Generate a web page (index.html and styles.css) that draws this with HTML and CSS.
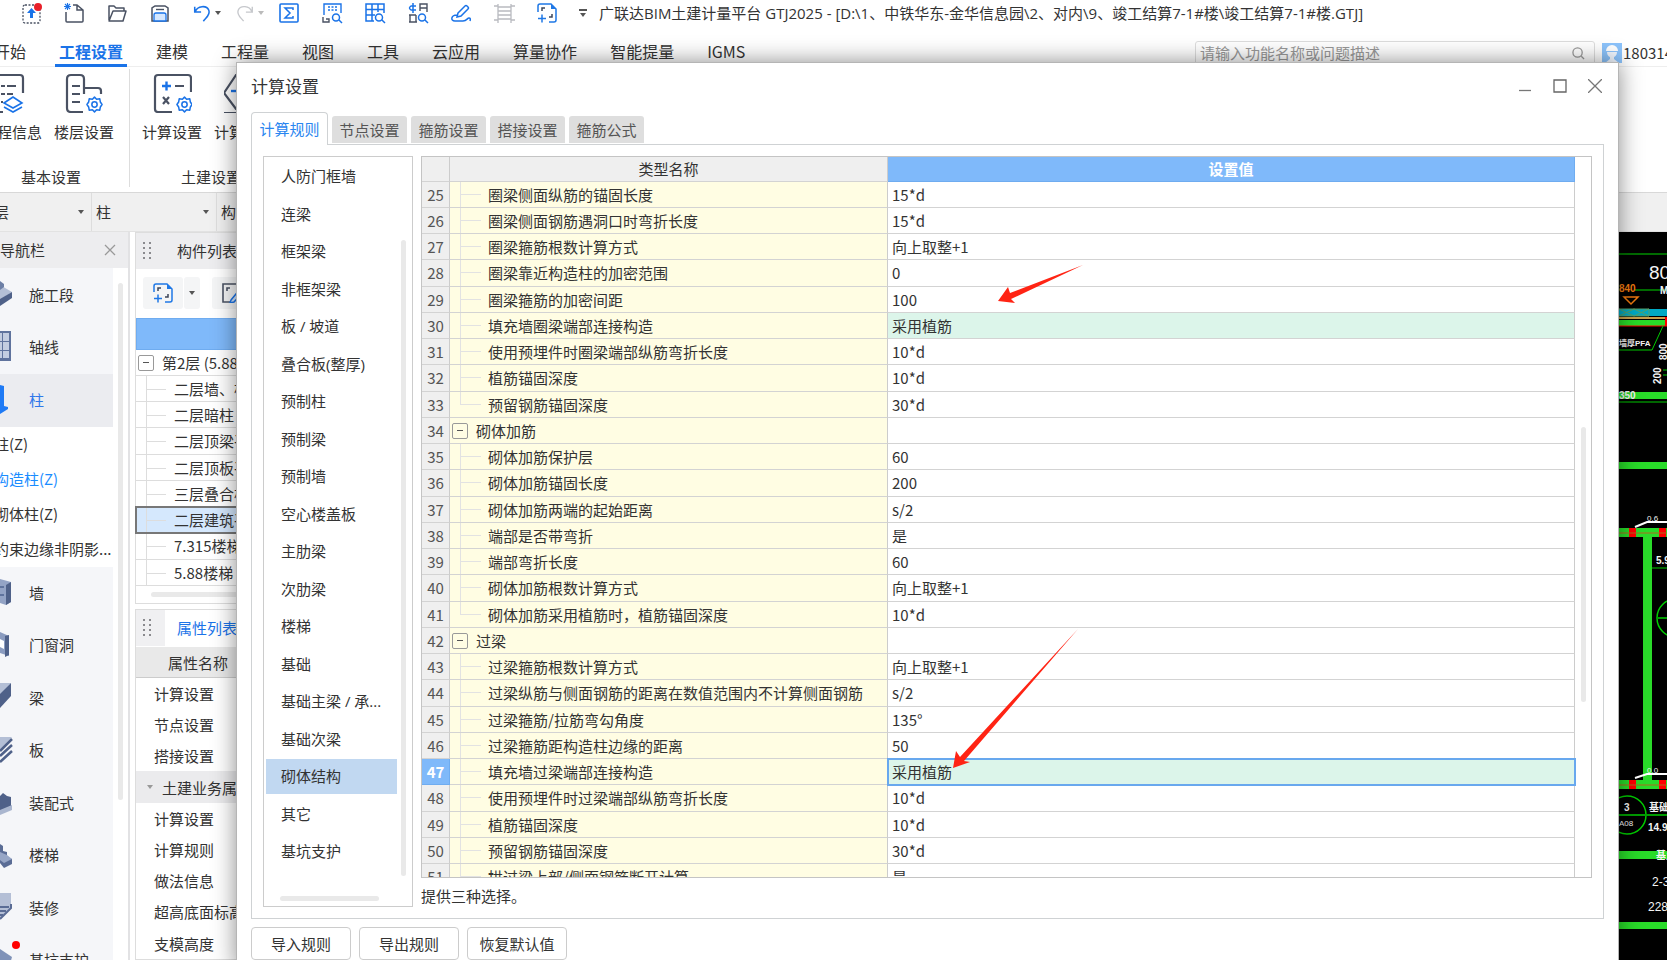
FILE: index.html
```html
<!DOCTYPE html>
<html lang="zh-CN">
<head>
<meta charset="utf-8">
<title>广联达BIM土建计量平台 GTJ2025</title>
<link rel="stylesheet" href="styles.css">
</head>
<body>
<svg class="defs" aria-hidden="true">
  <symbol id="gear" viewBox="0 0 18 18"><path d="M9 1.2 11.2 3.4 14.6 3 15.2 6.4 17 9 15.2 11.6 14.6 15 11.2 14.6 9 16.8 6.8 14.6 3.4 15 2.8 11.6 1 9 2.8 6.4 3.4 3 6.8 3.4Z" fill="none" stroke="#1a73e8" stroke-width="1.6" stroke-linejoin="round"/><circle cx="9" cy="9" r="2.8" fill="none" stroke="#1a73e8" stroke-width="1.6"/></symbol>
  <symbol id="newcomp" viewBox="0 0 20 20"><path d="M1 9V3q0-2 2-2h11l5 5v11q0 2-2 2h-5M1 15.500h8M5 11.500v8" fill="none" stroke="#1f78e6" stroke-width="1.500"/><path d="M14 1v5h5Z" fill="#1f78e6"/><path d="M5 8V5h3M15 11v3h-3" fill="none" stroke="#3c4558" stroke-width="1.500"/></symbol>
  <symbol id="grip" viewBox="0 0 8 18"><path d="M0 0h2v2H0zM6 0h2v2H6zM0 5h2v2H0zM6 5h2v2H6zM0 10h2v2H0zM6 10h2v2H6zM0 15h2v2H0zM6 15h2v2H6z" fill="#8a8a8e"/></symbol>
</svg>
<div class="app">
  <header class="titlebar">
    <div class="quick">
      <button aria-label="上传"><svg viewBox="0 0 22 22"><rect x="3" y="3" width="17" height="18" rx="2" fill="none" stroke="#4a5263" stroke-width="1.300" stroke-dasharray="2 1.500"/><path d="M11.500 6 16 11h-3v5h-3v-5H7Z" fill="#1a73e8"/><circle cx="18" cy="5" r="4" fill="#e8202a"/></svg></button>
      <button aria-label="新建"><svg viewBox="0 0 22 22"><path d="M3 10v9q0 1 1 1h15q1 0 1-1V8l-6-5h-4M14 3v5h6" fill="none" stroke="#4a5263" stroke-width="1.500"/><path d="M2 2l5 5M7 2 2 7M4.500 1v7M1 4.500h7" stroke="#1a73e8" stroke-width="1.100"/></svg></button>
      <button aria-label="打开"><svg viewBox="0 0 22 22"><path d="M3 18V4h5l2 2h8v3M3 19 7 9h13l-3 10Z" fill="none" stroke="#4a5263" stroke-width="1.500" stroke-linejoin="round"/></svg></button>
      <button aria-label="保存"><svg viewBox="0 0 22 22"><path d="M3 19V6l3-2h10l3 2v13Z" fill="none" stroke="#4a5263" stroke-width="1.500"/><path d="M5 19v-6q0-2 2-2h8q2 0 2 2v6Z" fill="#d6e8ff" stroke="#1a73e8" stroke-width="1.300"/><path d="M7 7.500h8" stroke="#4a5263" stroke-width="1.400"/></svg></button>
      <button class="pair" aria-label="撤销"><svg viewBox="0 0 22 22"><path d="M3 4v6h7M3.500 9.500C6 3 16 2 18.500 8c2 5-3 8-6 12" fill="none" stroke="#1a73e8" stroke-width="1.700"/></svg><i class="caret"></i></button>
      <button class="pair dim" aria-label="重做"><svg viewBox="0 0 22 22"><path d="M19 4v6h-7M18.500 9.500C16 3 6 2 3.500 8c-2 5 3 8 6 12" fill="none" stroke="#c6c8cc" stroke-width="1.500"/></svg><i class="caret"></i></button>
      <button aria-label="汇总"><svg viewBox="0 0 22 22"><rect x="2" y="2" width="18" height="18" rx="1" fill="none" stroke="#1a73e8" stroke-width="1.600"/><path d="M15 8V6H7l5 5-5 5h8v-2" fill="none" stroke="#1a73e8" stroke-width="1.500"/></svg></button>
      <button aria-label="查看报表"><svg viewBox="0 0 22 22"><path d="M3 13V2h17v9M7 5h2M10.500 5h2M14 5h2M7 8h2M10.500 8h2M14 8h2" fill="none" stroke="#1a73e8" stroke-width="1.400"/><path d="M2 15v5h6v-3H5" fill="none" stroke="#4a5263" stroke-width="1.400"/><circle cx="15" cy="15.500" r="3.500" fill="none" stroke="#1a73e8" stroke-width="1.500"/><path d="m18 18 3 3" stroke="#1a73e8" stroke-width="1.500"/></svg></button>
      <button aria-label="查看工程量"><svg viewBox="0 0 22 22"><path d="M10 19H2V2h18v9M2 7.500h18M2 13h9M8 2v17M14 2v8" fill="none" stroke="#1a73e8" stroke-width="1.500"/><circle cx="15" cy="15.500" r="3.500" fill="none" stroke="#1a73e8" stroke-width="1.500"/><path d="m18 18 3 3" stroke="#1a73e8" stroke-width="1.500"/></svg></button>
      <button aria-label="查看三维"><svg viewBox="0 0 22 22"><path d="M13 9V2h7v8M13 6h7M2 13h7M3 13v7M2 20h8M9 13v7" fill="none" stroke="#4a5263" stroke-width="1.400"/><path d="M9 4H4q-3 2 0 4h5M6 1v10" fill="none" stroke="#1a73e8" stroke-width="1.500"/><circle cx="15" cy="15.500" r="3.500" fill="none" stroke="#1a73e8" stroke-width="1.500"/><path d="m18 18 3 3" stroke="#1a73e8" stroke-width="1.500"/></svg></button>
      <button aria-label="编辑"><svg viewBox="0 0 22 22"><path d="m8 11 7-7q1-1 2 0l1 1q1 1 0 2l-7 7-4 1ZM7 13c-6 0-7 6-2 6h8c4 0 4-3 6-3q2 0 1 3" fill="none" stroke="#1a73e8" stroke-width="1.500"/></svg></button>
      <button aria-label="楼梯"><svg viewBox="0 0 22 22"><path d="M5 2v19M18 2v19M1 4h4M18 4h4M1 18h4M18 18h4M5 5h13M5 9h13M5 13h13M5 17h13" fill="none" stroke="#b9bbc0" stroke-width="1.300"/></svg></button>
      <button aria-label="新建构件"><svg viewBox="0 0 22 22"><use href="#newcomp" x="1" y="1" width="20" height="20"/></svg></button>
      <button class="more" aria-label="更多"><i class="bar"></i><i class="caret"></i></button>
    </div>
    <div class="apptitle">广联达BIM土建计量平台 GTJ2025 - [D:\1、中铁华东-金华信息园\2、对内\9、竣工结算7-1#楼\竣工结算7-1#楼.GTJ]</div>
  </header>
  <nav class="menubar">
    <a href="#">开始</a><a href="#" class="on">工程设置</a><a href="#">建模</a><a href="#">工程量</a><a href="#">视图</a><a href="#">工具</a><a href="#">云应用</a><a href="#">算量协作</a><a href="#">智能提量</a><a href="#">IGMS</a>
    <div class="account">
      <label class="search"><input type="text" aria-label="搜索" placeholder="请输入功能名称或问题描述"><svg viewBox="0 0 14 14"><circle cx="6" cy="6" r="5" fill="none" stroke="#999" stroke-width="1.400"/><path d="m10 10 3 3" stroke="#999" stroke-width="1.400"/></svg></label>
      <svg class="avatar" viewBox="0 0 20 20"><rect width="20" height="20" fill="#8cc3fb"/><path d="M4 8a6 6 0 0 1 12 0Z" fill="#fff"/><path d="M5 9h10c0 4-3 5-3 5v2l5 4H3l5-4v-2S5 13 5 9Z" fill="#f1f7ff"/></svg>
      <span class="user">180314</span>
    </div>
  </nav>
  <section class="ribbon">
    <div class="group g1">
      <div class="tools">
        <button><svg viewBox="0 0 40 40"><path d="M4 2h24q3 0 3 3v15M4 2v37h7M9 13h4M15 13h9M9 21h4M15 21h6M9 29h2" fill="none" stroke="#4a5263" stroke-width="2.200"/><path d="m12 30 9-6 9 6-9 5ZM12 34l9 5 9-5" fill="none" stroke="#1a73e8" stroke-width="1.600"/></svg>工程信息</button>
        <button><svg viewBox="0 0 40 40"><path d="M19 39H7q-4 0-4-4V6q0-4 4-4h9q4 0 4 4v15M8 13h8M8 21h8M8 29h8M20 15h14q3 0 3 3v3" fill="none" stroke="#4a5263" stroke-width="2.200"/><use href="#gear" x="22" y="23" width="17" height="17"/></svg>楼层设置</button>
      </div>
      <h2>基本设置</h2>
    </div>
    <div class="group g2">
      <div class="tools">
        <button><svg viewBox="0 0 40 40"><path d="M20 39H6q-3 0-3-3V5q0-3 3-3h30q3 0 3 3v14" fill="none" stroke="#4a5263" stroke-width="2.200"/><path d="M10 13h9M14.500 8.500v9" stroke="#1a73e8" stroke-width="2.400"/><path d="M23 13h9M11 24l6 7M17 24l-6 7" stroke="#4a5263" stroke-width="2.200"/><use href="#gear" x="24" y="23" width="17" height="17"/></svg>计算设置</button>
        <button><svg viewBox="0 0 40 40"><path d="M36 2H12L0 20l12 16h20M0 40h30" fill="none" stroke="#4a5263" stroke-width="2.200"/><path d="M7 18h12" stroke="#1a73e8" stroke-width="2.400"/></svg>计算规则</button>
      </div>
      <h2>土建设置</h2>
    </div>
  </section>
  <div class="combos">
    <button class="c1">层<i class="caret"></i></button><button class="c2">柱<i class="caret"></i></button><button class="c3">构造柱<i class="caret"></i></button>
  </div>
  <main class="work">
    <aside class="nav">
      <div class="phead">导航栏<button class="x" aria-label="关闭"><svg viewBox="0 0 12 12"><path d="m1 1 10 10M11 1 1 11" stroke="#999" stroke-width="1.300"/></svg></button></div>
      <div class="navbody">
        <div class="navlist">
          <a href="#"><svg viewBox="0 0 24 34"><path d="M0 9 12 16 0 24Z" fill="#b4bfd6"/><path d="M0 5 4 8v3L0 14Z" fill="#6d7fa6"/><path d="M12 16v6L0 30V23Z" fill="#4f6189"/></svg>施工段</a>
          <a href="#"><svg viewBox="0 0 24 34"><path d="M0 3h11v30H0Z" fill="#5f739d"/><path d="M0 5h2v8H0ZM3 5h6v8H3ZM0 14h2v8H0ZM3 14h6v8H3ZM0 23h2v7H0ZM3 23h6v7H3Z" fill="#c3cde0"/></svg>轴线</a>
          <a href="#" class="on"><svg viewBox="0 0 24 34"><path d="M0 4 4 5v20l4 1v2l-8 5Z" fill="#1f7af5"/></svg>柱</a>
          <div class="subs"><a href="#">柱(Z)</a><a href="#" class="cur">构造柱(Z)</a><a href="#">砌体柱(Z)</a><a href="#">约束边缘非阴影...</a></div>
          <a href="#"><svg viewBox="0 0 24 34"><path d="m0 5 11 3v20l-5 3L0 29Z" fill="#93a3c5"/><path d="m6 11 5-3v20l-5 3Z" fill="#4f6189"/><path d="M0 13h4M0 21h4" stroke="#5f739d" stroke-width="2"/></svg>墙</a>
          <a href="#"><svg viewBox="0 0 24 34"><path d="m0 6 9 4v20l-9-3Z" fill="#8b9cc0"/><path d="m5 10 4-1v20l-4 2Z" fill="#4f6189"/><path d="m0 13 4 2v8l-4-2Z" fill="#fff"/></svg>门窗洞</a>
          <a href="#"><svg viewBox="0 0 24 34"><path d="M0 4h11L0 16Z" fill="#b4bfd6"/><path d="M11 4v13L0 29V15Z" fill="#4f6189"/></svg>梁</a>
          <a href="#"><svg viewBox="0 0 24 34"><path d="M0 6h12L0 19Z" fill="#b4bfd6"/><path d="M12 8 0 20M12 14 0 25M12 20 0 31" stroke="#4f6189" stroke-width="2.500"/></svg>板</a>
          <a href="#"><svg viewBox="0 0 24 34"><path d="m0 12 3-3 4 3 4 1v9L0 27Z" fill="#4f6189"/><path d="M12 21v5L0 31v-5Z" fill="#aab6cf"/></svg>装配式</a>
          <a href="#"><svg viewBox="0 0 24 34"><path d="m0 8 3 2v5l4 1v5l5 2v5l-8 4-4-5Z" fill="#5a6c95"/><path d="m0 16 7 3 5 4-8 4-4-3Z" fill="#97a6c6"/></svg>楼梯</a>
          <a href="#"><svg viewBox="0 0 24 34"><path d="M0 4h11v14L0 29Z" fill="#b4bfd6"/><path d="M0 18h9M0 22h6M0 26h3M11 15v4L0 30" stroke="#5a6c95" stroke-width="2" fill="none"/></svg>装修</a>
          <a href="#" class="dot"><svg viewBox="0 0 24 34"><path d="m0 8 12 8-4 14H0Z" fill="#7f92b8"/></svg>基坑支护</a>
        </div>
        <i class="vthumb"></i>
      </div>
    </aside>
    <section class="mid">
      <div class="comp">
        <div class="phead"><svg class="grip"><use href="#grip"/></svg>构件列表</div>
        <div class="ctools"><button aria-label="新建"><svg viewBox="0 0 20 20"><use href="#newcomp"/></svg></button><button class="drop" aria-label="新建选项"><i class="caret"></i></button><button class="edit" aria-label="编辑"><svg viewBox="0 0 20 20"><path d="M9 19H1V1h14M5 8V5h3" fill="none" stroke="#4a5263" stroke-width="1.600"/><path d="M9 17 18 6l3 3-9 10-4 1Z" fill="#d3e6ff" stroke="#1a73e8" stroke-width="1.500"/></svg></button></div>
        <div class="bluebar"></div>
        <ul class="tree">
          <li class="root"><button class="box" aria-label="折叠"></button>第2层 (5.88~8.78)</li>
          <li>二层墙、柱</li><li>二层暗柱</li><li>二层顶梁平面</li><li>二层顶板平面</li><li>三层叠合板</li><li class="sel">二层建筑平面</li><li>7.315楼梯</li><li>5.88楼梯</li>
        </ul>
        <i class="hthumb"></i>
      </div>
      <div class="props">
        <div class="ptab"><span><svg class="grip"><use href="#grip"/></svg></span><a href="#">属性列表</a></div>
        <div class="pth">属性名称</div>
        <ul><li>计算设置</li><li>节点设置</li><li>搭接设置</li><li class="grp"><i class="caret"></i>土建业务属性</li><li>计算设置</li><li>计算规则</li><li>做法信息</li><li>超高底面标高</li><li>支模高度</li></ul>
      </div>
    </section>
    <svg class="cad" viewBox="0 0 48 728" preserveAspectRatio="xMinYMin slice">
      <rect width="48" height="728" fill="#000"/>
      <g stroke="#006b00" stroke-width="2" fill="none"><path d="M0 22h48M16 58h32"/></g>
      <g fill="#29db29"><path d="M0 88h46v6H0zM0 160h48v7H0zM0 230h48v7H0zM0 296h48v9H0zM24 305h9v243h-9zM0 548h48v9H0zM0 619h48v8H0zM0 690h48v7H0z"/></g>
      <path d="M0 86h46" stroke="#c9a04c" stroke-width="2"/><path d="M0 94h48" stroke="#f00"/>
      <rect y="77" width="48" height="7" fill="#00a9c4"/><path d="M0 77h30v7H0l15-7 15 7M0 77l15 7 15-7" stroke="#55a06a" fill="none"/>
      <path d="M46 85h2v9h-2zM10 296h7v9h-7zM40 296h7v9h-7zM10 548h7v9h-7zM40 548h7v9h-7z" fill="#f00"/>
      <path d="M0 301h48M0 553h48" stroke="#b06a20"/>
      <g stroke="#0c0" fill="none"><path d="M0 118h33l11-24M0 170h48M44 138h4M44 143h4M33 336h15"/><circle cx="8" cy="583" r="19" stroke-width="1.500"/><circle cx="57" cy="386" r="19" stroke-width="1.500"/><path d="M38 386h10M0 583h48" stroke="#009c00" stroke-width="2"/></g>
      <path d="M16 295 28 290H48M16 546l12-4H48" stroke="#fff" stroke-width="2" fill="none"/>
      <path d="M5 65h14l-7 7Z" stroke="#f07a10" stroke-width="1.500" fill="none"/>
      <g class="cadtext" fill="#f4f4f4">
        <text x="0" y="60" class="b o">840</text><text x="30" y="47" class="big">80</text><text x="41" y="62" class="b">MZ</text>
        <text x="0" y="114" class="s bold">墙厚PFA</text><text x="0" y="167" class="b">350</text>
        <text transform="translate(48 128) rotate(-90)" class="b">800</text><text transform="translate(42 152) rotate(-90)" class="b">200</text>
        <text x="28" y="289" class="s">0.6</text><text x="28" y="541" class="s">0.0</text><text x="37" y="332" class="b">5.94</text>
        <text x="5" y="579" class="b">3</text><text x="0" y="594" class="s">A08</text><text x="30" y="579" class="b">基础梁</text><text x="29" y="599" class="b">14.93</text>
        <text x="37" y="627" class="b">基土</text><text x="33" y="654" class="m">2-3</text><text x="29" y="679" class="m">228</text>
      </g>
    </svg>
  </main>
</div>

<div class="dialog" role="dialog" aria-label="计算设置">
  <div class="dhead"><h1>计算设置</h1>
    <div class="wbtn"><button aria-label="最小化"><svg viewBox="0 0 14 14"><path d="M1 11.500h12" stroke="#777" stroke-width="1.300"/></svg></button><button aria-label="最大化"><svg viewBox="0 0 14 14"><path d="M1 1h12v12H1Z" fill="none" stroke="#666" stroke-width="1.300"/></svg></button><button aria-label="关闭"><svg viewBox="0 0 14 14"><path d="m0 0 14 14M14 0 0 14" stroke="#777" stroke-width="1.300"/></svg></button></div>
  </div>
  <div class="tabs"><button class="on">计算规则</button><button>节点设置</button><button>箍筋设置</button><button>搭接设置</button><button>箍筋公式</button></div>
  <div class="panel">
    <div class="listbox">
      <ul><li>人防门框墙</li><li>连梁</li><li>框架梁</li><li>非框架梁</li><li>板 / 坡道</li><li>叠合板(整厚)</li><li>预制柱</li><li>预制梁</li><li>预制墙</li><li>空心楼盖板</li><li>主肋梁</li><li>次肋梁</li><li>楼梯</li><li>基础</li><li>基础主梁 / 承...</li><li>基础次梁</li><li class="on">砌体结构</li><li>其它</li><li>基坑支护</li></ul>
      <i class="vthumb"></i><i class="hthumb"></i>
    </div>
    <div class="right">
      <div class="gridbox">
        <table>
          <colgroup><col class="cn"><col class="ct"><col></colgroup>
          <thead><tr><th></th><th>类型名称</th><th class="act">设置值</th></tr></thead>
          <tbody>
            <tr><th>25</th><td>圈梁侧面纵筋的锚固长度</td><td>15*d</td></tr>
            <tr><th>26</th><td>圈梁侧面钢筋遇洞口时弯折长度</td><td>15*d</td></tr>
            <tr><th>27</th><td>圈梁箍筋根数计算方式</td><td>向上取整+1</td></tr>
            <tr><th>28</th><td>圈梁靠近构造柱的加密范围</td><td>0</td></tr>
            <tr><th>29</th><td>圈梁箍筋的加密间距</td><td>100</td></tr>
            <tr><th>30</th><td>填充墙圈梁端部连接构造</td><td class="green">采用植筋</td></tr>
            <tr><th>31</th><td>使用预埋件时圈梁端部纵筋弯折长度</td><td>10*d</td></tr>
            <tr><th>32</th><td>植筋锚固深度</td><td>10*d</td></tr>
            <tr class="last"><th>33</th><td>预留钢筋锚固深度</td><td>30*d</td></tr>
            <tr class="head"><th>34</th><td><button class="box" aria-label="折叠"></button>砌体加筋</td><td></td></tr>
            <tr><th>35</th><td>砌体加筋保护层</td><td>60</td></tr>
            <tr><th>36</th><td>砌体加筋锚固长度</td><td>200</td></tr>
            <tr><th>37</th><td>砌体加筋两端的起始距离</td><td>s/2</td></tr>
            <tr><th>38</th><td>端部是否带弯折</td><td>是</td></tr>
            <tr><th>39</th><td>端部弯折长度</td><td>60</td></tr>
            <tr><th>40</th><td>砌体加筋根数计算方式</td><td>向上取整+1</td></tr>
            <tr class="last"><th>41</th><td>砌体加筋采用植筋时，植筋锚固深度</td><td>10*d</td></tr>
            <tr class="head"><th>42</th><td><button class="box" aria-label="折叠"></button>过梁</td><td></td></tr>
            <tr><th>43</th><td>过梁箍筋根数计算方式</td><td>向上取整+1</td></tr>
            <tr><th>44</th><td>过梁纵筋与侧面钢筋的距离在数值范围内不计算侧面钢筋</td><td>s/2</td></tr>
            <tr><th>45</th><td>过梁箍筋/拉筋弯勾角度</td><td>135°</td></tr>
            <tr><th>46</th><td>过梁箍筋距构造柱边缘的距离</td><td>50</td></tr>
            <tr><th class="act">47</th><td>填充墙过梁端部连接构造</td><td class="green focus">采用植筋</td></tr>
            <tr><th>48</th><td>使用预埋件时过梁端部纵筋弯折长度</td><td>10*d</td></tr>
            <tr><th>49</th><td>植筋锚固深度</td><td>10*d</td></tr>
            <tr><th>50</th><td>预留钢筋锚固深度</td><td>30*d</td></tr>
            <tr><th>51</th><td>拱过梁上部/侧面钢筋断开计算</td><td>是</td></tr>
          </tbody>
        </table>
        <i class="vthumb"></i>
      </div>
      <p class="hint">提供三种选择。</p>
    </div>
  </div>
  <div class="foot"><button>导入规则</button><button>导出规则</button><button>恢复默认值</button></div>
</div>
<svg class="marks" aria-hidden="true" width="1120" height="800"><path d="M998 301 1008 287 1010 293 1083 265 1011 299 1015 303Z" fill="#ff2414"/><path d="M953 768 956 751 960 757 1078 629 964 761 970 762Z" fill="#ff2414"/></svg>
</body>
</html>
```

FILE: styles.css
```css
* { box-sizing: border-box; }
html, body { height: 100%; }
body { margin: 0; overflow: hidden; position: relative; background: #fff; color: #333; font: 15px/20px "Noto Sans CJK SC", "Noto Sans", sans-serif; }
button { font: inherit; color: inherit; border: 0; background: none; padding: 0; margin: 0; }
a { color: inherit; text-decoration: none; }
ul, h1, h2, p { margin: 0; padding: 0; list-style: none; font-weight: 400; }
i { display: block; flex: none; }
svg { display: block; flex: none; }
.defs { position: absolute; width: 0; height: 0; }
.caret { border: 3px solid transparent; border-top: 4px solid #555; border-bottom: 0; width: 6px; }
.dim .caret { border-top-color: #bbb; }

.app { height: 100%; display: flex; flex-direction: column; overflow: hidden; white-space: nowrap; }
.titlebar { flex: none; height: 28px; display: flex; align-items: center; padding-bottom: 3px; }
.quick { display: flex; align-items: center; gap: 21px; padding-left: 20px; width: 599px; }
.quick svg { width: 22px; height: 22px; }
.quick .pair { display: flex; align-items: center; gap: 3px; width: 22px; flex: none; }
.quick .pair svg { width: 20px; }
.quick .more { display: grid; gap: 2px; width: 6px; justify-items: center; }
.quick .bar { width: 8px; height: 2px; background: #555; }
.apptitle { font-family: "Open Sans", "Noto Sans CJK SC", sans-serif; }

.menubar { flex: none; height: 39px; display: flex; gap: 33px; padding: 10px 0 0; border-bottom: 1px solid #eee; font-size: 16px; line-height: 27px; }
.menubar a:first-child { margin-left: -6px; }
.menubar .on { color: #1a73e8; font-weight: 700; border-bottom: 3px solid #1a73e8; height: 29px; line-height: 27px; margin: 0 -4px; padding: 0 4px; }
.account { margin-left: auto; display: flex; align-items: center; margin-top: 4px; height: 22px; line-height: 22px; width: 472px; font-size: 15px; }
.account > * { flex: none; }
.search { display: flex; align-items: center; width: 400px; height: 24px; border: 1px solid #ddd; border-radius: 3px; padding: 0 9px 0 4px; margin-right: 7px; }
.search input { flex: 1; border: 0; outline: 0; background: none; font: inherit; padding: 0; }
.search input::placeholder { color: #999; }
.search svg { width: 13px; height: 13px; }
.avatar { width: 20px; height: 20px; margin-right: 1px; }

.ribbon { flex: none; height: 125px; display: flex; padding-top: 2px; }
.group { height: 118px; display: flex; flex-direction: column; justify-content: space-between; border-right: 1px solid #ddd; padding-top: 4px; }
.tools { display: flex; gap: 12px; }
.tools button { display: grid; justify-items: center; gap: 9px; width: 60px; }
.tools svg { width: 40px; height: 40px; }
.g1 { width: 130px; }
.g1 .tools { margin-left: -18px; }
.g1 h2 { padding-left: 21px; }
.g2 .tools { padding-left: 12px; }
.g2 h2 { padding-left: 51px; }
.group h2 { font-size: 15px; line-height: 20px; }

.combos { flex: none; height: 40px; display: flex; background: #f0f0f0; border-top: 1px solid #d8d8d8; border-bottom: 1px solid #e2e2e2; }
.combos button { display: flex; align-items: center; justify-content: space-between; border-right: 1px solid #ddd; padding: 0 7px 0 4px; }
.combos .c1 { width: 92px; text-indent: -10px; }
.combos .c2 { width: 125px; }
.combos .c3 { width: 125px; }

.work { flex: 1; min-height: 0; display: flex; }
.phead { height: 36px; background: #ededef; display: flex; align-items: center; flex: none; }
.nav { width: 130px; display: flex; flex-direction: column; border-right: 2px solid #e2e2e4; }
.phead .x { margin-left: auto; padding-right: 12px; }
.x svg { width: 12px; height: 12px; }
.navbody { display: flex; flex: 1; min-height: 0; overflow: hidden; gap: 5px; }
.navlist { width: 113px; background: #f5f6f9; padding-top: 1px; }
.navlist > a { height: 53px; display: flex; align-items: center; gap: 5px; position: relative; padding-bottom: 2px; }
.navlist > a:nth-child(even) { height: 52px; }
.navlist > a svg { width: 24px; height: 34px; margin-top: -4px; }
.navlist .on { background: #ebecf0; color: #2f78ea; }
.subs { background: #fff; display: grid; overflow: hidden; }
.subs a { height: 35px; line-height: 34px; margin-left: -6px; }
.subs .cur { color: #1a8cff; }
.dot::before { content: ""; position: absolute; left: 12px; top: 6px; width: 8px; height: 8px; border-radius: 50%; background: #f00; z-index: 1; }
.vthumb { width: 5px; border-radius: 3px; background: #e9e9e9; }
.hthumb { height: 5px; border-radius: 3px; background: #e9e9e9; }
.navbody .vthumb { margin-top: 15px; height: 517px; }

.mid { flex: 1; min-width: 0; margin-left: 5px; display: flex; flex-direction: column; gap: 5px; }
.comp, .props { border: 1px solid #ddd; }
.comp { height: 372px; }
.grip { width: 8px; height: 18px; }
.comp .phead { padding-left: 7px; gap: 26px; }
.ctools { display: flex; padding: 8px 7px; gap: 1px; height: 49px; }
.ctools button { background: #f4f5f6; height: 32px; width: 40px; display: grid; place-items: center; border-radius: 3px; }
.ctools svg { width: 20px; height: 20px; }
.ctools .drop { width: 16px; }
.ctools .edit { margin-left: 11px; }
.bluebar { height: 32px; background: #7fb9fa; border: 1px solid #6facf0; }
.tree li { height: 26px; line-height: 26px; padding-left: 38px; border-bottom: 1px solid #ddd; background: linear-gradient(#ddd, #ddd) 10px 0 / 1px 100% no-repeat, linear-gradient(#ddd, #ddd) 10px 13px / 20px 1px no-repeat; }
.tree li:nth-child(4n) { height: 27px; }
.tree .root { padding-left: 2px; display: flex; align-items: center; gap: 8px; background: none; }
.tree .sel { background-color: #d5e8fd; outline: 2px solid #777; outline-offset: -1px; }
.box { display: grid; place-items: center; width: 16px; height: 16px; border: 1px solid #999; border-radius: 2px; background: #fff; flex: none; }
.box::before { content: ""; width: 6px; height: 1px; background: #555; }
.comp .hthumb { margin: 6px 0 0 15px; }
.props { flex: 1; }
.ptab { display: flex; height: 37px; }
.ptab span { width: 29px; background: #f0f0f2; padding: 9px 7px; height: 36px; }
.ptab a { color: #1a73e8; padding: 8px 12px; }
.pth { height: 31px; line-height: 32px; background: #e9e9e9; border-bottom: 1px solid #ccc; padding-left: 32px; }
.props li { height: 31px; line-height: 31px; padding-left: 18px; }
.props li:nth-child(4n) { height: 32px; }
.props .grp { background: #ebebed; display: flex; align-items: center; gap: 9px; padding-left: 11px; }
.grp .caret { border-top-color: #999; }

.cad { width: 48px; height: 100%; }
.cadtext { font-family: "Liberation Sans Narrow", "Liberation Sans", "Noto Sans CJK SC", sans-serif; }
.cadtext .big { font-size: 19px; }
.cadtext .b { font-size: 10px; font-weight: 700; }
.cadtext .m { font-size: 12px; }
.cadtext .s { font-size: 8px; }
.cadtext .bold { font-weight: 700; }
.cadtext .o { fill: #f07a10; }

.dialog { position: absolute; left: 236px; right: 48px; top: 62px; bottom: -10px; background: #fff; border: 1px solid #b5b5b5; box-shadow: 0 0 22px rgba(0, 0, 0, .45); display: flex; flex-direction: column; padding: 0 14px 9px; }
.dhead { display: flex; height: 48px; align-items: center; justify-content: space-between; flex: none; padding-bottom: 2px; }
.dhead h1 { font-size: 17px; line-height: 24px; }
.wbtn { display: flex; gap: 21px; padding-right: 2px; }
.wbtn svg { width: 14px; height: 14px; }
.tabs { display: flex; gap: 4px; align-items: flex-end; height: 33px; flex: none; }
.tabs button { height: 27px; width: 75px; background: #dedede; border-radius: 3px 3px 0 0; color: #555; margin-bottom: 1px; }
.tabs .on { width: 77px; height: 33px; background: #fff; border: 1px solid #cfd2d4; border-bottom: 0; color: #2a86f0; border-radius: 4px 4px 0 0; position: relative; margin: 0 0 -1px; }
.panel { flex: 1; min-height: 0; border: 1px solid #cfd2d4; padding: 11px; display: flex; gap: 8px; }
.listbox { width: 150px; border: 1px solid #ccc; position: relative; padding: 2px 15px 37px 2px; flex: none; font-family: "Open Sans", "Noto Sans CJK SC", sans-serif; }
.listbox ul { height: 100%; display: flex; flex-direction: column; justify-content: space-between; }
.listbox li { height: 35px; line-height: 35px; padding-left: 15px; white-space: nowrap; }
.listbox .on { background: #c1d8f1; }
.listbox .vthumb { position: absolute; right: 6px; top: 83px; bottom: 30px; }
.listbox .hthumb { position: absolute; left: 16px; width: 99px; bottom: 5px; }
.right { flex: 1; min-width: 0; display: flex; flex-direction: column; }
.gridbox { flex: 1; min-height: 0; border: 1px solid #c4c4c4; overflow: hidden; display: flex; position: relative; padding-right: 16px; }
.gridbox .vthumb { position: absolute; right: 5px; top: 270px; height: 275px; }
table { border-collapse: separate; border-spacing: 0; table-layout: fixed; width: 100%; height: max-content; }
.cn { width: 28px; }
.ct { width: 438px; }
th, td { padding: 0; height: 26px; line-height: 24px; border-right: 1px solid #ccc; border-bottom: 1px solid #d3d3d3; font-weight: 400; text-align: left; white-space: nowrap; }
thead th { height: 25px; line-height: 24px; background: #efefef; text-align: center; }
tbody th { background: #efefef; text-align: center; color: #555; }
tbody tr:nth-child(4n) > * { height: 27px; }
th.act { background: #7fb9fa; color: #fff; font-weight: 700; border-color: #6facf0; }
td:nth-child(2) { background: linear-gradient(#e2e2e2, #e2e2e2) 10px 0 / 1px 100% no-repeat, linear-gradient(#e2e2e2, #e2e2e2) 10px 12px / 21px 1px no-repeat, #fffde3; padding-left: 38px; }
.last td:nth-child(2) { background-size: 1px 12px, 21px 1px, auto; }
.head td:nth-child(2) { background: #fffde3; padding-left: 2px; }
.head .box { float: left; margin: 4px 8px 0 0; background: #fffde3; }
td:nth-child(3) { padding-left: 4px; }
td.green { background: #dcf5ea; }
td.focus { outline: 2px solid #68a8ee; outline-offset: -1px; }
.hint { height: 29px; padding-top: 8px; flex: none; }
.foot { display: flex; gap: 8px; padding-top: 8px; flex: none; }
.foot button { width: 100px; height: 33px; border: 1px solid #ccc; border-radius: 4px; background: #fff; }
.marks { position: absolute; left: 0; top: 0; pointer-events: none; }
```
